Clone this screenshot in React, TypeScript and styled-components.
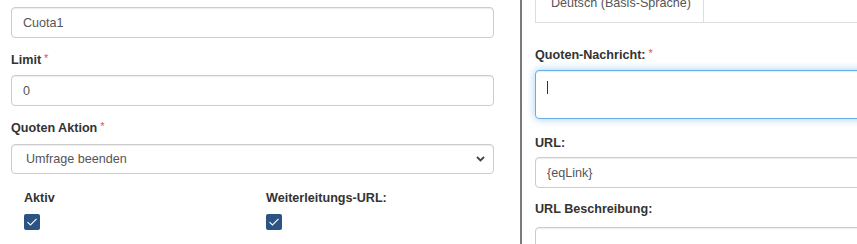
import React from 'react';
import styled, { createGlobalStyle } from 'styled-components';

const GlobalStyle = createGlobalStyle`
  html, body {
    margin: 0;
    padding: 0;
    background: #fff;
    overflow: hidden;
  }
  body {
    font-family: "Liberation Sans", Arial, sans-serif;
    font-size: 12.6px;
    line-height: 18px;
    color: #333;
  }
`;

const Page = styled.div`
  display: flex;
  width: 857px;
  height: 244px;
  overflow: hidden;
`;

const LeftPane = styled.div`
  flex: 0 0 520px;
  box-sizing: border-box;
  padding: 7px 26px 0 11px;
`;

const RightPane = styled.div`
  flex: 0 0 auto;
  width: 500px;
  box-sizing: border-box;
  border-left: 2px solid #7a7a7a;
  padding-left: 13px;
`;

const FormGroup = styled.div<{ $gap?: number }>`
  margin-top: ${p => p.$gap ?? 13}px;
`;

const Label = styled.div<{ $mb?: number }>`
  font-weight: bold;
  color: #333;
  height: 18px;
  margin-bottom: ${p => p.$mb ?? 6}px;
  white-space: nowrap;
`;

const Required = styled.span`
  color: #d9534f;
  font-weight: normal;
  font-size: 11px;
  vertical-align: top;
  margin-left: 3px;
  line-height: 14px;
`;

const Input = styled.input`
  display: block;
  width: 100%;
  height: 31px;
  box-sizing: border-box;
  margin: 0;
  padding: 0 11px;
  border: 1px solid #ccc;
  border-radius: 4px;
  box-shadow: inset 0 1px 1px rgba(0, 0, 0, 0.075);
  font-family: inherit;
  font-size: 12.6px;
  color: #555;
  background: #fff;
  outline: none;
`;

const SelectBox = styled.div`
  display: flex;
  align-items: center;
  justify-content: space-between;
  height: 30px;
  box-sizing: border-box;
  padding: 0 8px 0 14px;
  border: 1px solid #ccc;
  border-radius: 4px;
  box-shadow: inset 0 1px 1px rgba(0, 0, 0, 0.075);
  color: #555;
`;

const CheckRow = styled.div`
  display: grid;
  grid-template-columns: 242px 1fr;
  padding-left: 13px;
  margin-top: 15px;
`;

const CheckCol = styled.div`
  display: flex;
  flex-direction: column;
`;

const CheckBox = styled.span`
  display: flex;
  align-items: center;
  justify-content: center;
  width: 16px;
  height: 16px;
  margin-top: 7px;
  margin-left: 0;
  border-radius: 2px;
  background: #2b5383;
`;

const NavTabs = styled.div`
  display: flex;
  margin-top: -16px;
  border-bottom: 1px solid #ddd;
`;

const Tab = styled.div`
  padding: 10px 15px;
  width: 169px;
  box-sizing: border-box;
  border-left: 1px solid #ddd;
  border-right: 1px solid #ddd;
  color: #555;
  white-space: nowrap;
`;

const TextArea = styled.div`
  height: 49px;
  box-sizing: border-box;
  padding: 9px 11px;
  border: 1px solid #66afe9;
  border-radius: 4px;
  box-shadow: inset 0 1px 1px rgba(0, 0, 0, 0.075), 0 0 8px rgba(102, 175, 233, 0.6);
  background: #fff;
`;

const Caret = styled.span`
  display: block;
  width: 1px;
  height: 13px;
  margin-top: 1px;
  background: #333;
`;

const Chevron = () => (
  <svg width="9" height="6" viewBox="0 0 9 6">
    <path d="M1 1 L4.5 4.5 L8 1" fill="none" stroke="#444" strokeWidth="1.8" />
  </svg>
);

const Check = () => (
  <svg width="12" height="10" viewBox="0 0 12 10">
    <path d="M1.5 5.2 L4.5 8 L10.5 1.8" fill="none" stroke="#fff" strokeWidth="1.1" />
  </svg>
);

function App() {
  return (
    <>
      <GlobalStyle />
      <Page>
        <LeftPane>
          <Input value="Cuota1" readOnly />

          <FormGroup>
            <Label>
              Limit<Required>*</Required>
            </Label>
            <Input value="0" readOnly />
          </FormGroup>

          <FormGroup>
            <Label $mb={7}>
              Quoten Aktion<Required>*</Required>
            </Label>
            <SelectBox>
              <span>Umfrage beenden</span>
              <Chevron />
            </SelectBox>
          </FormGroup>

          <CheckRow>
            <CheckCol>
              <Label $mb={0}>Aktiv</Label>
              <CheckBox>
                <Check />
              </CheckBox>
            </CheckCol>
            <CheckCol>
              <Label $mb={0}>Weiterleitungs-URL:</Label>
              <CheckBox>
                <Check />
              </CheckBox>
            </CheckCol>
          </CheckRow>
        </LeftPane>

        <RightPane>
          <NavTabs>
            <Tab>Deutsch (Basis-Sprache)</Tab>
          </NavTabs>

          <FormGroup $gap={23}>
            <Label>
              Quoten-Nachricht:<Required>*</Required>
            </Label>
            <TextArea>
              <Caret />
            </TextArea>
          </FormGroup>

          <FormGroup $gap={15}>
            <Label $mb={5}>URL:</Label>
            <Input value="{eqLink}" readOnly />
          </FormGroup>

          <FormGroup $gap={12}>
            <Label $mb={9}>URL Beschreibung:</Label>
            <Input value="" readOnly />
          </FormGroup>
        </RightPane>
      </Page>
    </>
  );
}

export default App;
